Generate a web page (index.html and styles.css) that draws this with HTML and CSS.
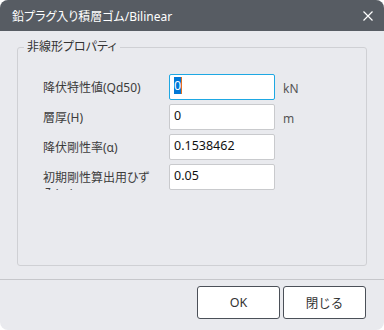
FILE: index.html
```html
<!DOCTYPE html>
<html lang="ja">
<head>
  <meta charset="UTF-8" />
  <meta name="viewport" content="width=device-width, initial-scale=1.0" />
  <title>鉛プラグ入り積層ゴム/Bilinear</title>
  <link rel="stylesheet" href="styles.css">
</head>
<body>
  <div class="dialog">
    <div class="titlebar">
      <span class="title">鉛プラグ入り積層ゴム/Bilinear</span>
      <svg class="close" width="12" height="12" viewBox="0 0 12 12">
        <path d="M1.5 1.5 L10.5 10.5 M10.5 1.5 L1.5 10.5" stroke="#fff" stroke-width="1.2" fill="none"/>
      </svg>
    </div>

    <div class="content">
      <fieldset class="group">
        <legend>非線形プロパティ</legend>

        <div class="row">
          <div class="label">降伏特性値(Qd50)</div>
          <div class="field focus"><span class="sel">0</span></div>
          <div class="unit">kN</div>
        </div>

        <div class="row">
          <div class="label">層厚(H)</div>
          <div class="field">0</div>
          <div class="unit">m</div>
        </div>

        <div class="row">
          <div class="label">降伏剛性率(α)</div>
          <div class="field">0.1538462</div>
        </div>

        <div class="row">
          <div class="label">初期剛性算出用ひずみ(εy)</div>
          <div class="field">0.05</div>
        </div>
      </fieldset>
    </div>

    <div class="footer">
      <button class="btn">OK</button>
      <button class="btn">閉じる</button>
    </div>
  </div>
</body>
</html>
```

FILE: styles.css
```css
* {
  box-sizing: border-box;
}

body {
  margin: 0;
  background-color: #fff;
  font-family: "Noto Sans", "Noto Sans CJK JP", sans-serif;
  font-feature-settings: "palt";
}

.dialog {
  width: 384px;
  height: 330px;
  background-color: #e9eaee;
  border-radius: 8px;
  overflow: hidden;
  display: flex;
  flex-direction: column;
}

.titlebar {
  height: 31px;
  background-color: #575c63;
  display: flex;
  align-items: center;
  justify-content: space-between;
  padding: 0 10px 0 12px;
}

.title {
  color: #fff;
  font-size: 12px;
}

.content {
  flex: 1;
  display: flex;
  flex-direction: column;
  padding: 8px 17px 13px 17px;
}

.group {
  flex: 1;
  margin: 0;
  padding: 19px 0 0 0;
  border: 1px solid #cfd0d4;
  border-radius: 3px;
  min-width: 0;
}

.group legend {
  margin-left: 6px;
  padding: 0 3px;
  font-size: 12px;
  line-height: 16px;
  color: #333;
}

.row {
  display: flex;
  align-items: flex-start;
  margin: 0 0 4px 25px;
}

.label {
  width: 113px;
  height: 20px;
  margin: 6px 13px 0 0;
  font-size: 12px;
  line-height: 16px;
  color: #3c3c3c;
  overflow: hidden;
}

.field {
  width: 106px;
  height: 26px;
  background-color: #fff;
  border: 1px solid #c9cacd;
  border-radius: 2px;
  padding: 0 4px 2px 4px;
  font-size: 12.5px;
  line-height: 22px;
  color: #111;
}

.field.focus {
  border-color: #1ea8e3;
}

.sel {
  background-color: #0078d7;
  color: #fff;
  border-right: 1px solid #e07020;
}

.unit {
  margin: 7px 0 0 8px;
  font-size: 12px;
  line-height: 16px;
  color: #555;
}

.footer {
  height: 51px;
  border-top: 1px solid #c6c7cb;
  display: flex;
  justify-content: flex-end;
  gap: 3px;
  padding: 6px 18px 0 0;
}

.btn {
  width: 83px;
  height: 33px;
  background-color: #fff;
  border: 1px solid #4b5058;
  border-radius: 3px;
  font-family: inherit;
  font-size: 12.5px;
  color: #333;
}
```
